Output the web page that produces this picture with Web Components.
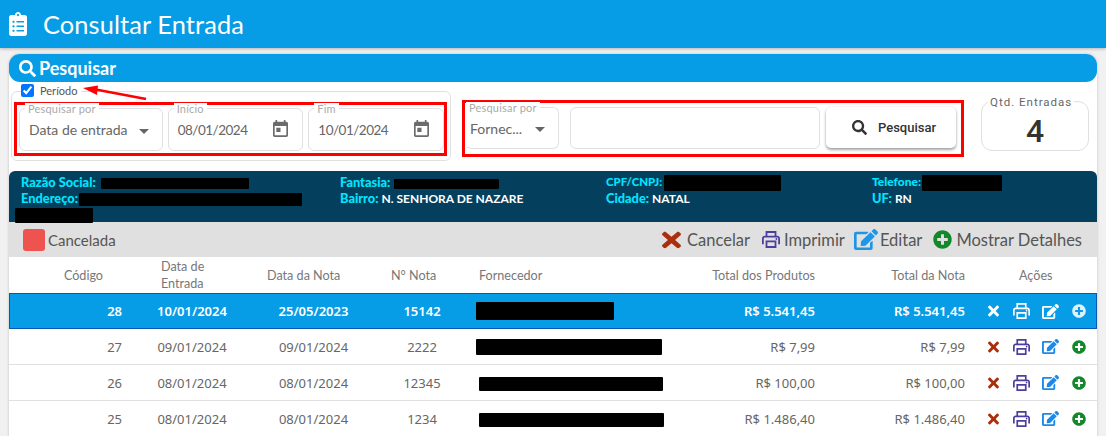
<!DOCTYPE html>
<html lang="pt-BR">
<head>
<meta charset="utf-8">
<title>Consultar Entrada</title>
<style>
  html, body { margin: 0; height: 436px; overflow: hidden; }
  body { background: #f1f1f1; font-family: Lato, "Open Sans", sans-serif; color: #555; }
  main { display: block; margin: 6px 9px 0; background: #fff; height: 382px; border-radius: 11px 11px 0 0; box-shadow: 0 0 3px rgba(0,0,0,.22); }
</style>
</head>
<body>
<app-header title="Consultar Entrada"></app-header>
<main>
  <panel-head label="Pesquisar"></panel-head>
  <search-bar></search-bar>
  <supplier-info></supplier-info>
  <legend-bar></legend-bar>
  <entry-table>
    <entry-row selected codigo="28" entrada="10/01/2024" nota="25/05/2023" numero="15142" produtos="R$ 5.541,45" total="R$ 5.541,45" mask="-3,138,18"></entry-row>
    <entry-row codigo="27" entrada="09/01/2024" nota="09/01/2024" numero="2222" produtos="R$ 7,99" total="R$ 7,99" mask="-3,186,16"></entry-row>
    <entry-row codigo="26" entrada="08/01/2024" nota="08/01/2024" numero="12345" produtos="R$ 100,00" total="R$ 100,00" mask="0,184,14"></entry-row>
    <entry-row codigo="25" entrada="08/01/2024" nota="08/01/2024" numero="1234" produtos="R$ 1.486,40" total="R$ 1.486,40" mask="0,185,14"></entry-row>
  </entry-table>
</main>

<script>
  const ICONS = {
    search: ['0 0 512 512', 'M505 442.7L405.3 343c-4.5-4.5-10.6-7-17-7H372c27.6-35.3 44-79.7 44-128C416 93.1 322.9 0 208 0S0 93.1 0 208s93.1 208 208 208c48.3 0 92.7-16.4 128-44v16.3c0 6.4 2.5 12.5 7 17l99.7 99.7c9.4 9.4 24.6 9.4 33.9 0l28.3-28.3c9.4-9.4 9.4-24.6.1-34zM208 336c-70.7 0-128-57.2-128-128 0-70.7 57.2-128 128-128 70.7 0 128 57.2 128 128 0 70.7-57.2 128-128 128z'],
    clipboard: ['0 0 384 512', 'M336 64h-80c0-35.3-28.7-64-64-64s-64 28.7-64 64H48C21.5 64 0 85.5 0 112v352c0 26.5 21.5 48 48 48h288c26.5 0 48-21.5 48-48V112c0-26.5-21.5-48-48-48zM96 424c-13.3 0-24-10.7-24-24s10.7-24 24-24 24 10.7 24 24-10.7 24-24 24zm0-96c-13.3 0-24-10.7-24-24s10.7-24 24-24 24 10.7 24 24-10.7 24-24 24zm0-96c-13.3 0-24-10.7-24-24s10.7-24 24-24 24 10.7 24 24-10.7 24-24 24zm96-192c13.3 0 24 10.7 24 24s-10.7 24-24 24-24-10.7-24-24 10.7-24 24-24zm128 368c0 4.4-3.6 8-8 8H168c-4.4 0-8-3.6-8-8v-16c0-4.4 3.6-8 8-8h144c4.4 0 8 3.6 8 8v16zm0-96c0 4.4-3.6 8-8 8H168c-4.4 0-8-3.6-8-8v-16c0-4.4 3.6-8 8-8h144c4.4 0 8 3.6 8 8v16zm0-96c0 4.4-3.6 8-8 8H168c-4.4 0-8-3.6-8-8v-16c0-4.4 3.6-8 8-8h144c4.4 0 8 3.6 8 8v16z'],
    times: ['0 0 352 512', 'M242.72 256l100.07-100.07c12.28-12.28 12.28-32.19 0-44.48l-22.24-22.24c-12.28-12.28-32.19-12.28-44.48 0L176 189.28 75.93 89.21c-12.28-12.28-32.19-12.28-44.48 0L9.21 111.45c-12.28 12.28-12.28 32.19 0 44.48L109.28 256 9.21 356.07c-12.28 12.28-12.28 32.19 0 44.48l22.24 22.24c12.28 12.28 32.2 12.28 44.48 0L176 322.72l100.07 100.07c12.28 12.28 32.2 12.28 44.48 0l22.24-22.24c12.28-12.28 12.28-32.19 0-44.48L242.72 256z'],
    plus: ['0 0 512 512', 'M256 8C119 8 8 119 8 256s111 248 248 248 248-111 248-248S393 8 256 8zm144 276c0 6.6-5.4 12-12 12h-92v92c0 6.6-5.4 12-12 12h-56c-6.6 0-12-5.4-12-12v-92h-92c-6.6 0-12-5.4-12-12v-56c0-6.6 5.4-12 12-12h92v-92c0-6.6 5.4-12 12-12h56c6.6 0 12 5.4 12 12v92h92c6.6 0 12 5.4 12 12v56z'],
    edit: ['0 0 576 512', 'M402.6 83.2l90.2 90.2c3.8 3.8 3.8 10 0 13.8L274.4 405.6l-92.8 10.3c-12.4 1.4-22.9-9.1-21.5-21.5l10.3-92.8L388.8 83.2c3.8-3.8 10-3.8 13.8 0zm162-22.9l-48.8-48.8c-15.2-15.2-39.9-15.2-55.2 0l-35.4 35.4c-3.8 3.8-3.8 10 0 13.8l90.2 90.2c3.8 3.8 10 3.8 13.8 0l35.4-35.4c15.2-15.3 15.2-40 0-55.2zM384 346.2V448H64V128h229.8c3.2 0 6.2-1.3 8.5-3.5l40-40c7.6-7.6 2.2-20.5-8.5-20.5H48C21.5 64 0 85.5 0 112v352c0 26.5 21.5 48 48 48h352c26.5 0 48-21.5 48-48V306.2c0-10.7-12.9-16-20.5-8.5l-40 40c-2.2 2.3-3.5 5.3-3.5 8.5z'],
    print: ['2 3 20 18', 'M19 8h-1V3H6v5H5c-1.66 0-3 1.34-3 3v6h4v4h12v-4h4v-6c0-1.66-1.34-3-3-3zM8 5h8v3H8V5zm8 14H8v-4h8v4zm2-2v-4H6v4H4v-6c0-.55.45-1 1-1h14c.55 0 1 .45 1 1v6h-2zM18 10.5a1 1 0 1 0 0 2 1 1 0 0 0 0-2z'],
    today: ['3 1 18 20', 'M19 3h-1V1h-2v2H8V1H6v2H5c-1.11 0-1.99.9-1.99 2L3 19c0 1.1.89 2 2 2h14c1.1 0 2-.9 2-2V5c0-1.1-.9-2-2-2zm0 16H5V8h14v11zM7 10h5v5H7z']
  }

  // small helper so each class only declares its css and markup
  class ShadowEl extends HTMLElement {
    connectedCallback() {
      if (this.shadowRoot) return
      this.attachShadow({ mode: 'open' }).innerHTML = this.render()
    }
  }

  class UiIcon extends ShadowEl {
    render() {
      const [box, d] = ICONS[this.getAttribute('name')]
      const w = this.getAttribute('w'), h = this.getAttribute('h')
      return `<style>:host{display:inline-flex;flex:none;color:${this.getAttribute('color') || 'inherit'}}svg{display:block}</style>
        <svg width="${w}" height="${h}" viewBox="${box}" preserveAspectRatio="none"><path fill="currentColor" fill-rule="evenodd" d="${d}"/></svg>`
    }
  }
  customElements.define('ui-icon', UiIcon)

  class UiMask extends ShadowEl {
    render() {
      const w = this.getAttribute('w'), h = this.getAttribute('h')
      return `<style>:host{display:inline-block;width:${w}px;height:${h}px;background:#000;border-radius:1px;vertical-align:middle;margin-block:-8px}</style>`
    }
  }
  customElements.define('ui-mask', UiMask)

  class AppHeader extends ShadowEl {
    render() {
      return `<style>
        :host{display:flex;align-items:center;gap:16px;height:48px;box-sizing:border-box;padding:0 0 0 9px;background:#069ce6;color:#fff;box-shadow:0 1px 3px rgba(0,0,0,.25);position:relative}
        h1{margin:0;font:400 25.4px Lato,sans-serif;letter-spacing:.1px}
      </style>
      <ui-icon name="clipboard" w="18" h="24"></ui-icon><h1>${this.getAttribute('title')}</h1>`
    }
  }
  customElements.define('app-header', AppHeader)

  class PanelHead extends ShadowEl {
    render() {
      return `<style>
        :host{display:flex;align-items:center;gap:3px;height:28px;padding-left:10px;background:#069ce6;color:#fff;border-radius:11px}
        span{font:700 18px Lato,sans-serif}
      </style>
      <ui-icon name="search" w="17" h="17"></ui-icon><span>${this.getAttribute('label')}</span>`
    }
  }
  customElements.define('panel-head', PanelHead)

  class OutlineField extends ShadowEl {
    render() {
      const label = this.getAttribute('label') || ''
      const value = this.getAttribute('value') || ''
      const icon = this.getAttribute('icon')
      const arrow = icon === 'arrow' ? '<i></i>' : ''
      const cal = icon === 'today' ? '<ui-icon name="today" w="15" h="17" color="#6b6b6b" style="margin-top:-3px"></ui-icon>' : ''
      return `<style>
        :host{box-sizing:border-box;height:43px;border:1px solid #e0e0e0;border-radius:6px;position:relative;width:var(--w);padding:0 var(--pr,14px) 0 var(--pl,9px);font:400 var(--fs,14px) Lato,sans-serif;letter-spacing:var(--ls,0);color:#666}
        :host{display:flex;align-items:center;justify-content:space-between;border-left-color:var(--bl,#e0e0e0)}
        label{position:absolute;left:var(--ll,5px);top:-6px;padding:0 3px;background:#fff;font-size:11px;line-height:11px;color:#aaa;letter-spacing:.2px}
        span{white-space:nowrap}
        i{display:block;width:0;height:0;border:5px solid transparent;border-top:5px solid #666;border-bottom:0;margin-top:3px}
      </style>
      ${label ? `<label>${label}</label>` : ''}<span>${value}</span>${arrow}${cal}`
    }
  }
  customElements.define('outline-field', OutlineField)

  class RedBox extends ShadowEl {
    render() {
      return `<style>:host{display:flex;box-sizing:border-box;border:3px solid #f00;align-items:flex-start}</style><slot></slot>`
    }
  }
  customElements.define('red-box', RedBox)

  class SearchBar extends ShadowEl {
    render() {
      return `<style>
        :host{display:flex;align-items:flex-start;height:89px;position:relative;padding-top:9px;box-sizing:border-box}
        .periodo{box-sizing:border-box;width:440px;height:70px;margin-left:2px;border:1px solid #e0e0e0;border-radius:6px;padding:10px 1px 0 2px;position:relative}
        .check{position:absolute;left:9px;top:-8px;display:flex;align-items:center;gap:6px;background:#fff;padding-right:4px;font:400 11px Lato,sans-serif;color:#555}
        .check input{margin:0;width:13px;height:13px;accent-color:#0075ff}
        #r1{width:433px;height:54px;padding:3px 0 0 2px;gap:5px}
        #r2{width:502px;height:57px;margin-left:11px;margin-top:9px;padding:4px 0 0 0;gap:11px}
        #pick{--w:94px;--pl:4px;--pr:13px;--ll:0px;--bl:transparent;height:42px}
        .date{--w:136px;--fs:13.5px;--ls:-.5px}
        button{box-sizing:border-box;width:130px;height:41px;margin-left:-5px;padding:0 0 0 6px;border:0;border-radius:5px;background:#fff;display:flex;align-items:center;justify-content:center;gap:11px;font:500 13px Roboto,sans-serif;color:#333;box-shadow:0 2px 3px rgba(0,0,0,.35),0 0 2px rgba(0,0,0,.12)}
        .qtd{box-sizing:border-box;width:108px;height:50px;margin-left:17px;margin-top:10px;border:1px solid #e0e0e0;border-radius:11px;position:relative;text-align:center;font:500 32px/58px Roboto,sans-serif;color:#333}
        .qtd label{position:absolute;left:6px;top:-7px;padding:0 2px;background:#fff;font:400 11.5px/14px Roboto,sans-serif;letter-spacing:1px;color:#666;white-space:nowrap}
        svg{position:absolute;left:0;top:0;overflow:visible;pointer-events:none}
      </style>
      <div class="periodo">
        <div class="check"><input type="checkbox" checked><span>Período</span></div>
        <red-box id="r1">
          <outline-field style="--w:144px;--pr:13px" label="Pesquisar por" value="Data de entrada" icon="arrow"></outline-field>
          <outline-field class="date" label="Início" value="08/01/2024" icon="today"></outline-field>
          <outline-field class="date" label="Fim" value="10/01/2024" icon="today"></outline-field>
        </red-box>
      </div>
      <red-box id="r2">
        <outline-field id="pick" label="Pesquisar por" value="Fornec..." icon="arrow"></outline-field>
        <outline-field style="--w:250px;height:42px"></outline-field>
        <button><ui-icon name="search" w="15" h="15" color="#333"></ui-icon>Pesquisar</button>
      </red-box>
      <div class="qtd"><label>Qtd. Entradas</label>4</div>
      <svg width="1" height="1">
        <path d="M137 17 L84 7" stroke="#f00" stroke-width="2.5" fill="none"/>
        <path d="M74 6 L89 3.5 L88 13 Z" fill="#f00"/>
      </svg>`
    }
  }
  customElements.define('search-bar', SearchBar)

  class SupplierInfo extends ShadowEl {
    render() {
      return `<style>
        :host{display:grid;grid-template-columns:319px 266px 266px 1fr;grid-auto-rows:16px;box-sizing:border-box;height:51px;padding:3px 0 0 12px;background:#053f5e;border-radius:6px 6px 0 0;color:#fff;font:700 12px/16px Lato,sans-serif;white-space:nowrap}
        b{color:#00e5ff;font-size:12.8px}
        .wrap{grid-column:1 / -1;margin-left:-6px;line-height:14px;padding-top:2px}
      </style>
      <div><b>Razão Social:</b> <ui-mask style="margin-left:2px" w="148" h="11"></ui-mask></div>
      <div><b>Fantasia:</b> <ui-mask style="margin-left:1px" w="105" h="10"></ui-mask></div>
      <div><b style="font-size:11.4px">CPF/CNPJ:</b> <ui-mask style="margin-left:-1px" w="117" h="16"></ui-mask></div>
      <div><b style="font-size:12px">Telefone:</b> <ui-mask style="margin-left:-2px" w="80" h="16"></ui-mask></div>
      <div><b>Endereço:</b> <ui-mask style="margin-left:-2px" w="223" h="13"></ui-mask></div>
      <div><b>Bairro:</b> N. SENHORA DE NAZARE</div>
      <div><b>Cidade:</b> NATAL</div>
      <div><b>UF:</b> RN</div>
      <div class="wrap"><ui-mask w="78" h="15"></ui-mask></div>`
    }
  }
  customElements.define('supplier-info', SupplierInfo)

  class LegendBar extends ShadowEl {
    render() {
      return `<style>
        :host{display:flex;align-items:center;height:35px;box-sizing:border-box;padding:0 15px 0 14px;background:#e0e0e0;font:400 16.5px Lato,sans-serif;color:#555}
        .swatch{width:22px;height:22px;border-radius:3px;background:#ef5350;margin-right:3px}
        .cancelada{font-size:15px;margin-right:auto}
        .a{display:flex;align-items:center;gap:4px}
      </style>
      <span class="swatch"></span><span class="cancelada">Cancelada</span>
      <span class="a" style="gap:6px"><ui-icon name="times" w="19" h="24" color="#ac2f0c"></ui-icon>Cancelar</span>
      <span class="a" style="margin-left:12px"><ui-icon name="print" w="18" h="17" color="#4b3f9e"></ui-icon>Imprimir</span>
      <span class="a" style="gap:2px;margin-left:9px"><ui-icon name="edit" w="24" h="21" color="#1e96e8"></ui-icon>Editar</span>
      <span class="a" style="margin-left:11px"><ui-icon name="plus" w="19" h="19" color="#12882b"></ui-icon>Mostrar Detalhes</span>`
    }
  }
  customElements.define('legend-bar', LegendBar)

  const COLS = '123px 120px 123px 94px 181px 175px 150px 122px'

  class EntryTable extends ShadowEl {
    render() {
      return `<style>
        :host{display:block;font:400 12.6px Lato,sans-serif;color:#777;background:#fff}
        .head{display:grid;grid-template-columns:${COLS};height:36px;align-items:center;line-height:17px}
        .r{text-align:right}
      </style>
      <div class="head">
        <div class="r" style="padding-right:29px">Código</div>
        <div style="padding:0 30px 0 29px">Data de Entrada</div>
        <div style="padding-left:15px">Data da Nota</div>
        <div style="padding-left:16px">N° Nota</div>
        <div style="padding-left:10px">Fornecedor</div>
        <div class="r" style="padding-right:10px">Total dos Produtos</div>
        <div class="r" style="padding-right:10px">Total da Nota</div>
        <div style="padding-left:44px">Ações</div>
      </div>
      <slot></slot>`
    }
  }
  customElements.define('entry-table', EntryTable)

  class EntryRow extends ShadowEl {
    render() {
      const a = n => this.getAttribute(n)
      const sel = this.hasAttribute('selected')
      const [mx, mw, mh] = a('mask').split(',')
      const col = c => sel ? '#fff' : c
      return `<style>
        :host{display:grid;grid-template-columns:${COLS};align-items:center;height:36px;box-sizing:border-box;text-align:center;font:${sel ? 600 : 400} 13px "Noto Sans",sans-serif;color:${sel ? '#fff' : '#666'};background:${sel ? '#069ce6' : '#fff'};border-bottom:1px solid ${sel ? '#0a56b4' : '#e0e0e0'};${sel ? 'border-top:1px solid #0a56b4;box-shadow:inset 1px 0 #0a56b4,inset -1px 0 #0a56b4;' : ''}}
        .r{text-align:right;padding-right:10px}
        .f{text-align:left;padding-left:10px;margin-left:${mx}px;line-height:0}
        .acts{display:flex;align-items:center;padding-left:13px}
      </style>
      <div class="r">${a('codigo')}</div><div>${a('entrada')}</div><div>${a('nota')}</div><div>${a('numero')}</div>
      <div class="f"><ui-mask w="${mw}" h="${mh}"></ui-mask></div>
      <div class="r">${a('produtos')}</div><div class="r">${a('total')}</div>
      <div class="acts">
        <ui-icon name="times" w="11" h="16" color="${col('#ac2f0c')}"></ui-icon>
        <ui-icon name="print" w="17" h="16" color="${sel ? '#fff' : '#4b3f9e'}" style="margin-left:14px"></ui-icon>
        <ui-icon name="edit" w="17" h="15" color="${col('#1e88e8')}" style="margin-left:12px"></ui-icon>
        <ui-icon name="plus" w="14" h="14" color="${sel ? '#dff1fc' : '#12882b'}" style="margin-left:13px"></ui-icon>
      </div>`
    }
  }
  customElements.define('entry-row', EntryRow)
</script>
</body>
</html>
